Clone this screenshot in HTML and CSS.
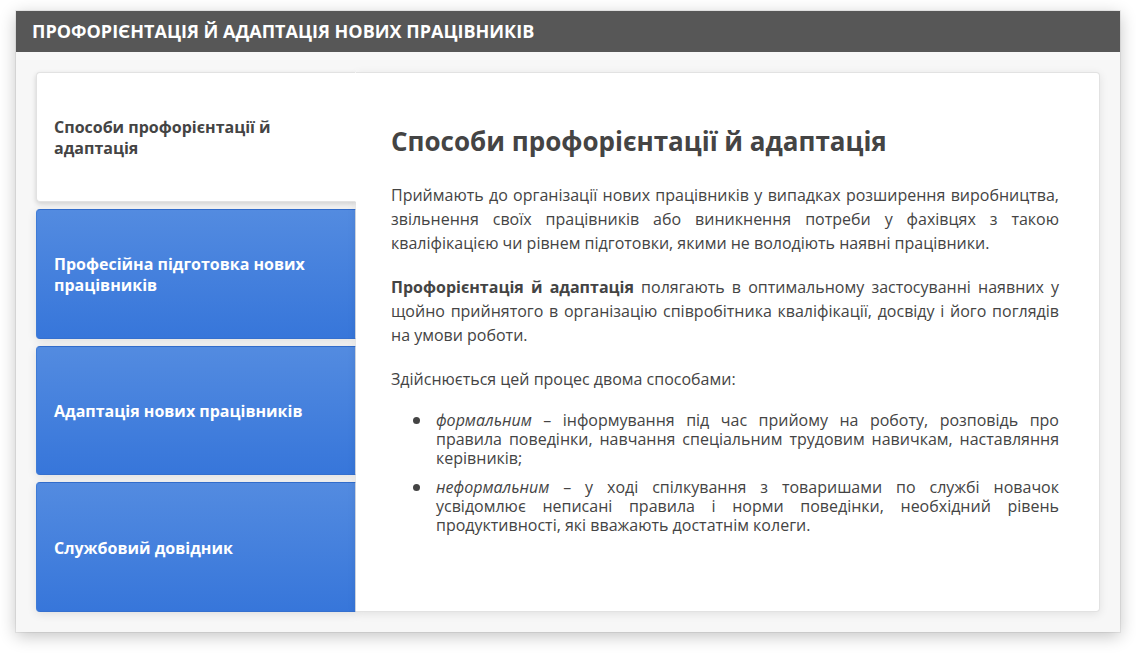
FILE: index.html
```
<!DOCTYPE html>
<html lang="uk">
<head>
<meta charset="utf-8">
<meta name="viewport" content="width=device-width, initial-scale=1">
<title>Профорієнтація й адаптація нових працівників</title>
<link rel="stylesheet" href="styles.css">
</head>
<body>
<main class="card">
  <header class="card-header">
    <h1 class="card-title">Профорієнтація й адаптація нових працівників</h1>
  </header>
  <div class="card-body">
    <div class="tabs" role="tablist" aria-orientation="vertical">
      <button class="tab tab-active" type="button" role="tab" id="tab-methods" aria-selected="true" aria-controls="panel">Способи профорієнтації й адаптація</button>
      <button class="tab" type="button" role="tab" aria-selected="false">Професійна підготовка нових працівників</button>
      <button class="tab" type="button" role="tab" aria-selected="false">Адаптація нових працівників</button>
      <button class="tab" type="button" role="tab" aria-selected="false">Службовий довідник</button>
    </div>
    <section class="panel" id="panel" role="tabpanel" aria-labelledby="tab-methods">
      <h2 class="panel-title">Способи профорієнтації й адаптація</h2>
      <p class="text">Приймають до організації нових працівників у випадках розширення виробництва, звільнення своїх працівників або виникнення потреби у фахівцях з такою кваліфікацією чи рівнем підготовки, якими не володіють наявні працівники.</p>
      <p class="text"><strong>Профорієнтація й адаптація</strong> полягають в оптимальному застосуванні наявних у щойно прийнятого в організацію співробітника кваліфікації, досвіду і його поглядів на умови роботи.</p>
      <p class="text">Здійснюється цей процес двома способами:</p>
      <ul class="list">
        <li class="item"><em>формальним</em> – інформування під час прийому на роботу, розповідь про правила поведінки, навчання спеціальним трудовим навичкам, наставляння керівників;</li>
        <li class="item"><em>неформальним</em> – у ході спілкування з товаришами по службі новачок усвідомлює неписані правила і норми поведінки, необхідний рівень продуктивності, які вважають достатнім колеги.</li>
      </ul>
    </section>
  </div>
</main>
</body>
</html>
```
FILE: styles.css
```
* {
  box-sizing: border-box;
}

body {
  margin: 0;
  padding: 11px 16px 21px;
  background: #fff;
  color: #444;
  font-family: "Open Sans", "Noto Sans", sans-serif;
  font-size: 16px;
}

.card {
  background: #f7f7f7;
  box-shadow: 0 0 0 1px rgba(0, 0, 0, 0.06), 0 4px 16px rgba(0, 0, 0, 0.24);
}

.card-header {
  padding: 8px 16px 9px;
  background: #575757;
}

.card-title {
  margin: 0;
  color: #fff;
  font-size: 18px;
  font-weight: 700;
  line-height: 24px;
  text-transform: uppercase;
}

.card-body {
  display: grid;
  grid-template-columns: 320px 1fr;
  padding: 20px;
}

.tabs {
  display: grid;
  grid-auto-rows: 1fr;
  gap: 7px;
}

.tab {
  padding: 3px 40px 0 17px;
  border: 1px solid #316ccb;
  border-right-color: #d5dbe5;
  border-left-color: #3f7bd6;
  border-bottom-color: #3570cf;
  border-radius: 4px 0 0 4px;
  background: linear-gradient(#538be0, #3776da);
  box-shadow: 0 2px 10px rgba(0, 0, 0, 0.1);
  color: #fff;
  font-family: inherit;
  font-size: 16px;
  font-weight: 700;
  line-height: 21px;
  text-align: left;
  cursor: pointer;
}

.tab-active {
  position: relative;
  z-index: 1;
  border-color: #e2e2e2;
  border-right-color: #fff;
  background: #fff;
  box-shadow: 0 2px 5px rgba(0, 0, 0, 0.16);
  clip-path: inset(-8px 0 -8px -8px);
  color: #444;
}

.panel {
  padding: 48px 40px 66px 35px;
  border: 1px solid #e2e2e2;
  border-left: 0;
  border-radius: 0 4px 4px 0;
  background: #fff;
  box-shadow: 0 2px 10px rgba(0, 0, 0, 0.09);
}

.panel-title {
  margin: 0 0 22px;
  font-size: 26px;
  font-weight: 700;
  line-height: 40px;
}

.text {
  margin: 0 0 20px;
  line-height: 24px;
  text-align: justify;
}

.list {
  margin: 0;
  padding: 0 0 0 45px;
  list-style: none;
}

.item {
  position: relative;
  margin-bottom: 10px;
  line-height: 19px;
  text-align: justify;
}

.item::before {
  content: "";
  position: absolute;
  top: 6px;
  left: -23px;
  width: 7px;
  height: 7px;
  border-radius: 50%;
  background: #444;
}
```
